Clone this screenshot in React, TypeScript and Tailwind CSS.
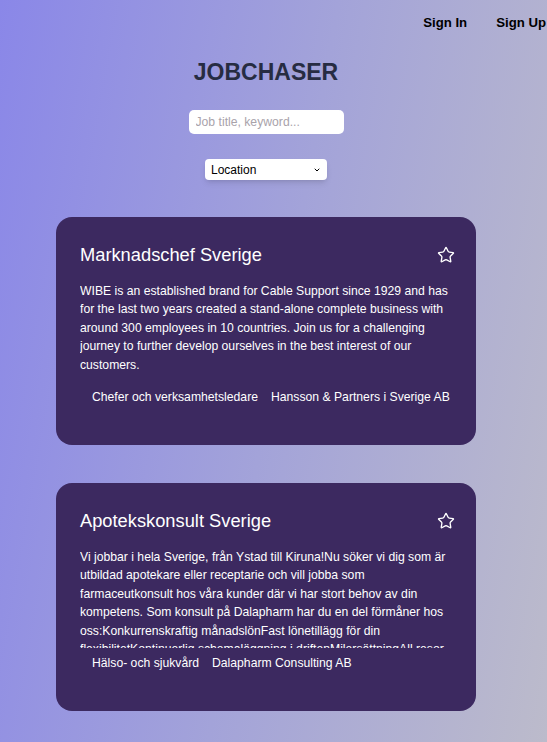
import { ChevronDown, Star } from "lucide-react";

interface Job {
  title: string;
  description: string;
  tags: string[];
}

const jobs: Job[] = [
  {
    title: "Marknadschef Sverige",
    description:
      "WIBE is an established brand for Cable Support since 1929 and has for the last two years created a stand-alone complete business with around 300 employees in 10 countries. Join us for a challenging journey to further develop ourselves in the best interest of our customers.",
    tags: ["Chefer och verksamhetsledare", "Hansson & Partners i Sverige AB"],
  },
  {
    title: "Apotekskonsult Sverige",
    description:
      "Vi jobbar i hela Sverige, från Ystad till Kiruna!Nu söker vi dig som är utbildad apotekare eller receptarie och vill jobba som farmaceutkonsult hos våra kunder där vi har stort behov av din kompetens. Som konsult på Dalapharm har du en del förmåner hos oss:Konkurrenskraftig månadslönFast lönetillägg för din flexibilitetKontinuerlig schemaläggning i driftenMilersättningAll resor och boende betalas av oss.",
    tags: ["Hälso- och sjukvård", "Dalapharm Consulting AB"],
  },
];

function JobCard({ job }: { job: Job }) {
  return (
    <div className="w-[420px] rounded-2xl bg-[#3c2960] px-6 pt-[24px] pb-[39px] text-white">
      <div className="flex items-center justify-between">
        <h2 className="text-[18.3px] leading-[28px]">{job.title}</h2>
        <Star className="-mr-[3px] h-[18px] w-[18px]" strokeWidth={1.8} />
      </div>
      <p className="mt-[13px] h-[100px] overflow-hidden text-[12.2px] leading-[18.4px] text-white">
        {job.description}
      </p>
      <div className="mt-[6px] flex gap-[13px] pl-3 text-[12.2px] leading-[18px]">
        {job.tags.map((tag) => (
          <span key={tag}>{tag}</span>
        ))}
      </div>
    </div>
  );
}

export default function App() {
  return (
    <div className="h-[742px] w-[547px] overflow-hidden bg-[linear-gradient(100deg,#8a87e8_0%,#a3a3d9_50%,#bcbbcb_100%)] font-['Liberation_Sans',Arial,sans-serif]">
      <nav className="flex h-[46px] items-center justify-end gap-[29px] text-[13.2px] font-bold text-black">
        <a href="#">Sign In</a>
        <a href="#" className="mr-[1px] whitespace-nowrap">
          Sign Up
        </a>
      </nav>
      <main className="flex w-[532px] flex-col items-center">
        <h1 className="mt-[10px] text-[23px] leading-[32px] font-bold text-[#272c42]">JOBCHASER</h1>
        <input
          type="text"
          placeholder="Job title, keyword..."
          className="mt-[22px] h-[24px] w-[155px] rounded-[5px] bg-white px-[7px] text-[12.2px] outline-none placeholder:text-[#a9a3ab]"
        />
        <div className="relative mt-[25px]">
          <select className="block h-[21px] w-[122px] appearance-none rounded-[4px] bg-white pl-[6px] text-[12px] text-black shadow-md outline-none">
            <option>Location</option>
            <option>Stockholm</option>
            <option>Göteborg</option>
            <option>Malmö</option>
          </select>
          <ChevronDown
            className="pointer-events-none absolute top-[7px] right-[6px] h-[8px] w-[8px] text-black"
            strokeWidth={3}
          />
        </div>
        <div className="mt-[37px] flex flex-col gap-[38px]">
          {jobs.map((job) => (
            <JobCard key={job.title} job={job} />
          ))}
        </div>
      </main>
    </div>
  );
}
